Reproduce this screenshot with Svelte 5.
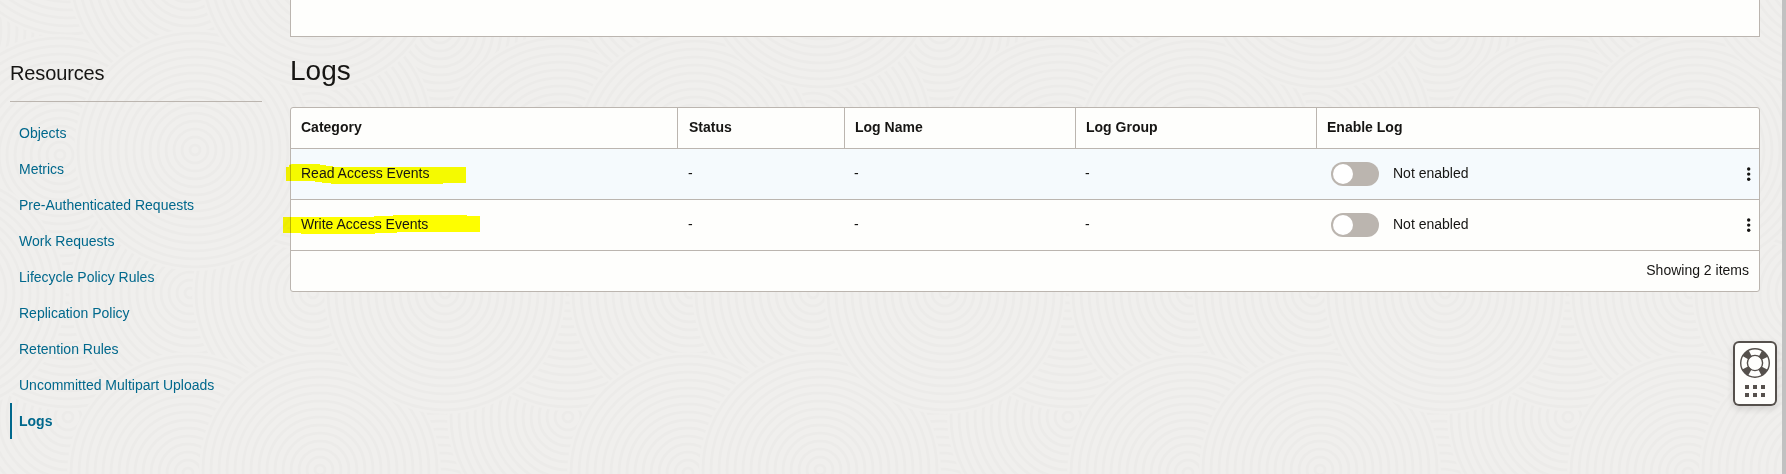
<script>
  const links = ['Objects', 'Metrics', 'Pre-Authenticated Requests', 'Work Requests', 'Lifecycle Policy Rules', 'Replication Policy', 'Retention Rules', 'Uncommitted Multipart Uploads', 'Logs'];
  const columns = ['Category', 'Status', 'Log Name', 'Log Group', 'Enable Log'];
  const rows = [
    { name: 'Read Access Events', mark: 'M0 4H3V2L6 1H34V2H40V3H47V4H180V20H157V21H45V20H36V19H29V18H0Z' },
    { name: 'Write Access Events', mark: 'M-3 3H88V2H107V1H181V2H194V18H111V19H89V20H15V19H-3Z' }
  ];
  // Repeating wallpaper tile: overlapping discs of concentric rings, painted in order.
  const base = [
    [440, 150], [440, 30], [68, 417], [68, 290], [60, 155], [190, 293], [313, 293],
    [313, 130], [188, 473], [195, 150], [320, 470], [445, 293]
  ];
  const discs = base.flatMap(([x, y]) =>
    [-500, 0, 500].flatMap((dx) => [-500, 0, 500].map((dy) => [x + dx, y + dy]))
  );
  const rings = Array.from({ length: 15 }, (_, i) => 5 + i * 8);
</script>

<svg class="wallpaper" aria-hidden="true">
  <defs>
    <g id="disc">
      <circle r="121" fill="#f0efed" />
      {#each rings as r}<circle {r} fill="none" stroke="#ecebe9" stroke-width="2.6" />{/each}
    </g>
    <pattern id="tile" width="500" height="500" patternUnits="userSpaceOnUse">
      <rect width="500" height="500" fill="#f0efed" />
      {#each discs as [x, y]}<use href="#disc" {x} {y} />{/each}
    </pattern>
  </defs>
  <rect width="100%" height="100%" fill="url(#tile)" />
</svg>

<div class="page">
  <aside>
    <h2>Resources</h2>
    <nav>
      {#each links as link}
        <a href="#top" class:active={link === 'Logs'}>{link}</a>
      {/each}
    </nav>
  </aside>
  <main>
    <div class="panel"></div>
    <h1>Logs</h1>
    <section class="table">
      <div class="row head">
        {#each columns as c}<div class="cell">{c}</div>{/each}
      </div>
      {#each rows as row, i}
        <div class="row body" class:hover={i === 0}>
          <div class="cell first">
            <svg class="mark" width="200" height="24" aria-hidden="true"><path d={row.mark} fill="#ff0" /></svg>
            <span>{row.name}</span>
          </div>
          <div class="cell">-</div>
          <div class="cell">-</div>
          <div class="cell">-</div>
          <div class="cell enable">
            <span class="switch"><i></i></span>
            <span class="state">Not enabled</span>
            <svg class="dots" width="4" height="14" viewBox="0 0 4 14"><circle cx="1.7" cy="2" r="1.7" /><circle cx="1.7" cy="7.1" r="1.7" /><circle cx="1.7" cy="12.2" r="1.7" /></svg>
          </div>
        </div>
      {/each}
      <footer>Showing 2 items</footer>
    </section>
  </main>
  <div class="scroll"></div>
</div>

<div class="help">
  <svg width="44" height="65" viewBox="0 0 44 65">
    <g fill="none" stroke="#55504c">
      <circle cx="22" cy="22" r="10.8" stroke-width="7" stroke-dasharray="6.4 10.565" stroke-dashoffset="-5.28" />
      <circle cx="22" cy="22" r="14.3" stroke-width="1.4" />
      <circle cx="22" cy="22" r="7.6" stroke-width="1.4" />
    </g>
    <g fill="#55504c">
      {#each [12, 20, 28] as x}<rect {x} y="44" width="4" height="4" /><rect {x} y="52" width="4" height="4" />{/each}
    </g>
  </svg>
</div>

<style>
  :global(body) { background: #f0efed; overflow: hidden; }
  .wallpaper { position: absolute; inset: 0; width: 1786px; height: 474px; }
  .page {
    position: relative;
    display: grid;
    grid-template-columns: 290px 1470px 22px 4px;
    height: 474px;
    color: #161513;
    font: 14px/20px "Liberation Sans", Arial, sans-serif;
  }
  aside { padding: 60px 28px 0 10px; }
  h2 { margin: 0; padding-bottom: 14px; border-bottom: 1px solid #bbb5af; font-size: 20px; line-height: 27px; font-weight: 400; letter-spacing: -0.13px; }
  nav { display: flex; flex-direction: column; padding-top: 13px; }
  nav a { height: 36px; box-sizing: border-box; padding-left: 9px; line-height: 36px; color: #00688c; text-decoration: none; }
  nav a.active { padding-left: 7px; border-left: 2px solid #00688c; font-weight: 700; }
  .panel { height: 36px; background: #fefefc; border: 1px solid #bbb5af; border-top: 0; }
  h1 { margin: 0; padding-top: 16px; height: 54px; font-size: 28px; line-height: 36px; font-weight: 400; }
  .table { border: 1px solid #bbb5af; border-radius: 3px; background: #fefefc; }
  .row { display: grid; grid-template-columns: 386px 167px 231px 241px 1fr; border-bottom: 1px solid #bbb5af; }
  .head { height: 40px; font-weight: 700; }
  .head .cell { padding: 9px 10px 0; border-left: 1px solid #bbb5af; }
  .head .cell:first-child { border-left: 0; }
  .body { height: 50px; }
  .body .cell { padding: 14px 10px 0; }
  .row .cell:nth-child(2) { padding-left: 11px; }
  .hover { background: #f5fafd; }
  .first { position: relative; }
  .first span { position: relative; }
  .mark { position: absolute; left: -5px; top: 14px; overflow: visible; mix-blend-mode: multiply; }
  .body .enable { display: flex; align-items: flex-start; padding: 13px 8px 0 15px; }
  .switch { width: 48px; height: 24px; box-sizing: border-box; padding: 2px; border-radius: 12px; background: #bbb5af; }
  .switch i { display: block; width: 20px; height: 20px; border-radius: 50%; background: #fff; }
  .state { margin: 1px 0 0 14px; }
  .dots { margin: 5px 0 0 auto; fill: #161513; }
  footer { height: 40px; line-height: 38px; padding-right: 10px; text-align: right; }
  .scroll { grid-column: 4; background: #c1c1c1; }
  .help {
    position: absolute; left: 1733px; top: 341px; width: 44px; height: 65px; box-sizing: border-box;
    border-radius: 6px; background: #fefefc; box-shadow: inset 0 0 0 2px #55504c, 0 3px 7px rgba(0,0,0,.12);
  }
  .help svg { display: block; }
</style>
